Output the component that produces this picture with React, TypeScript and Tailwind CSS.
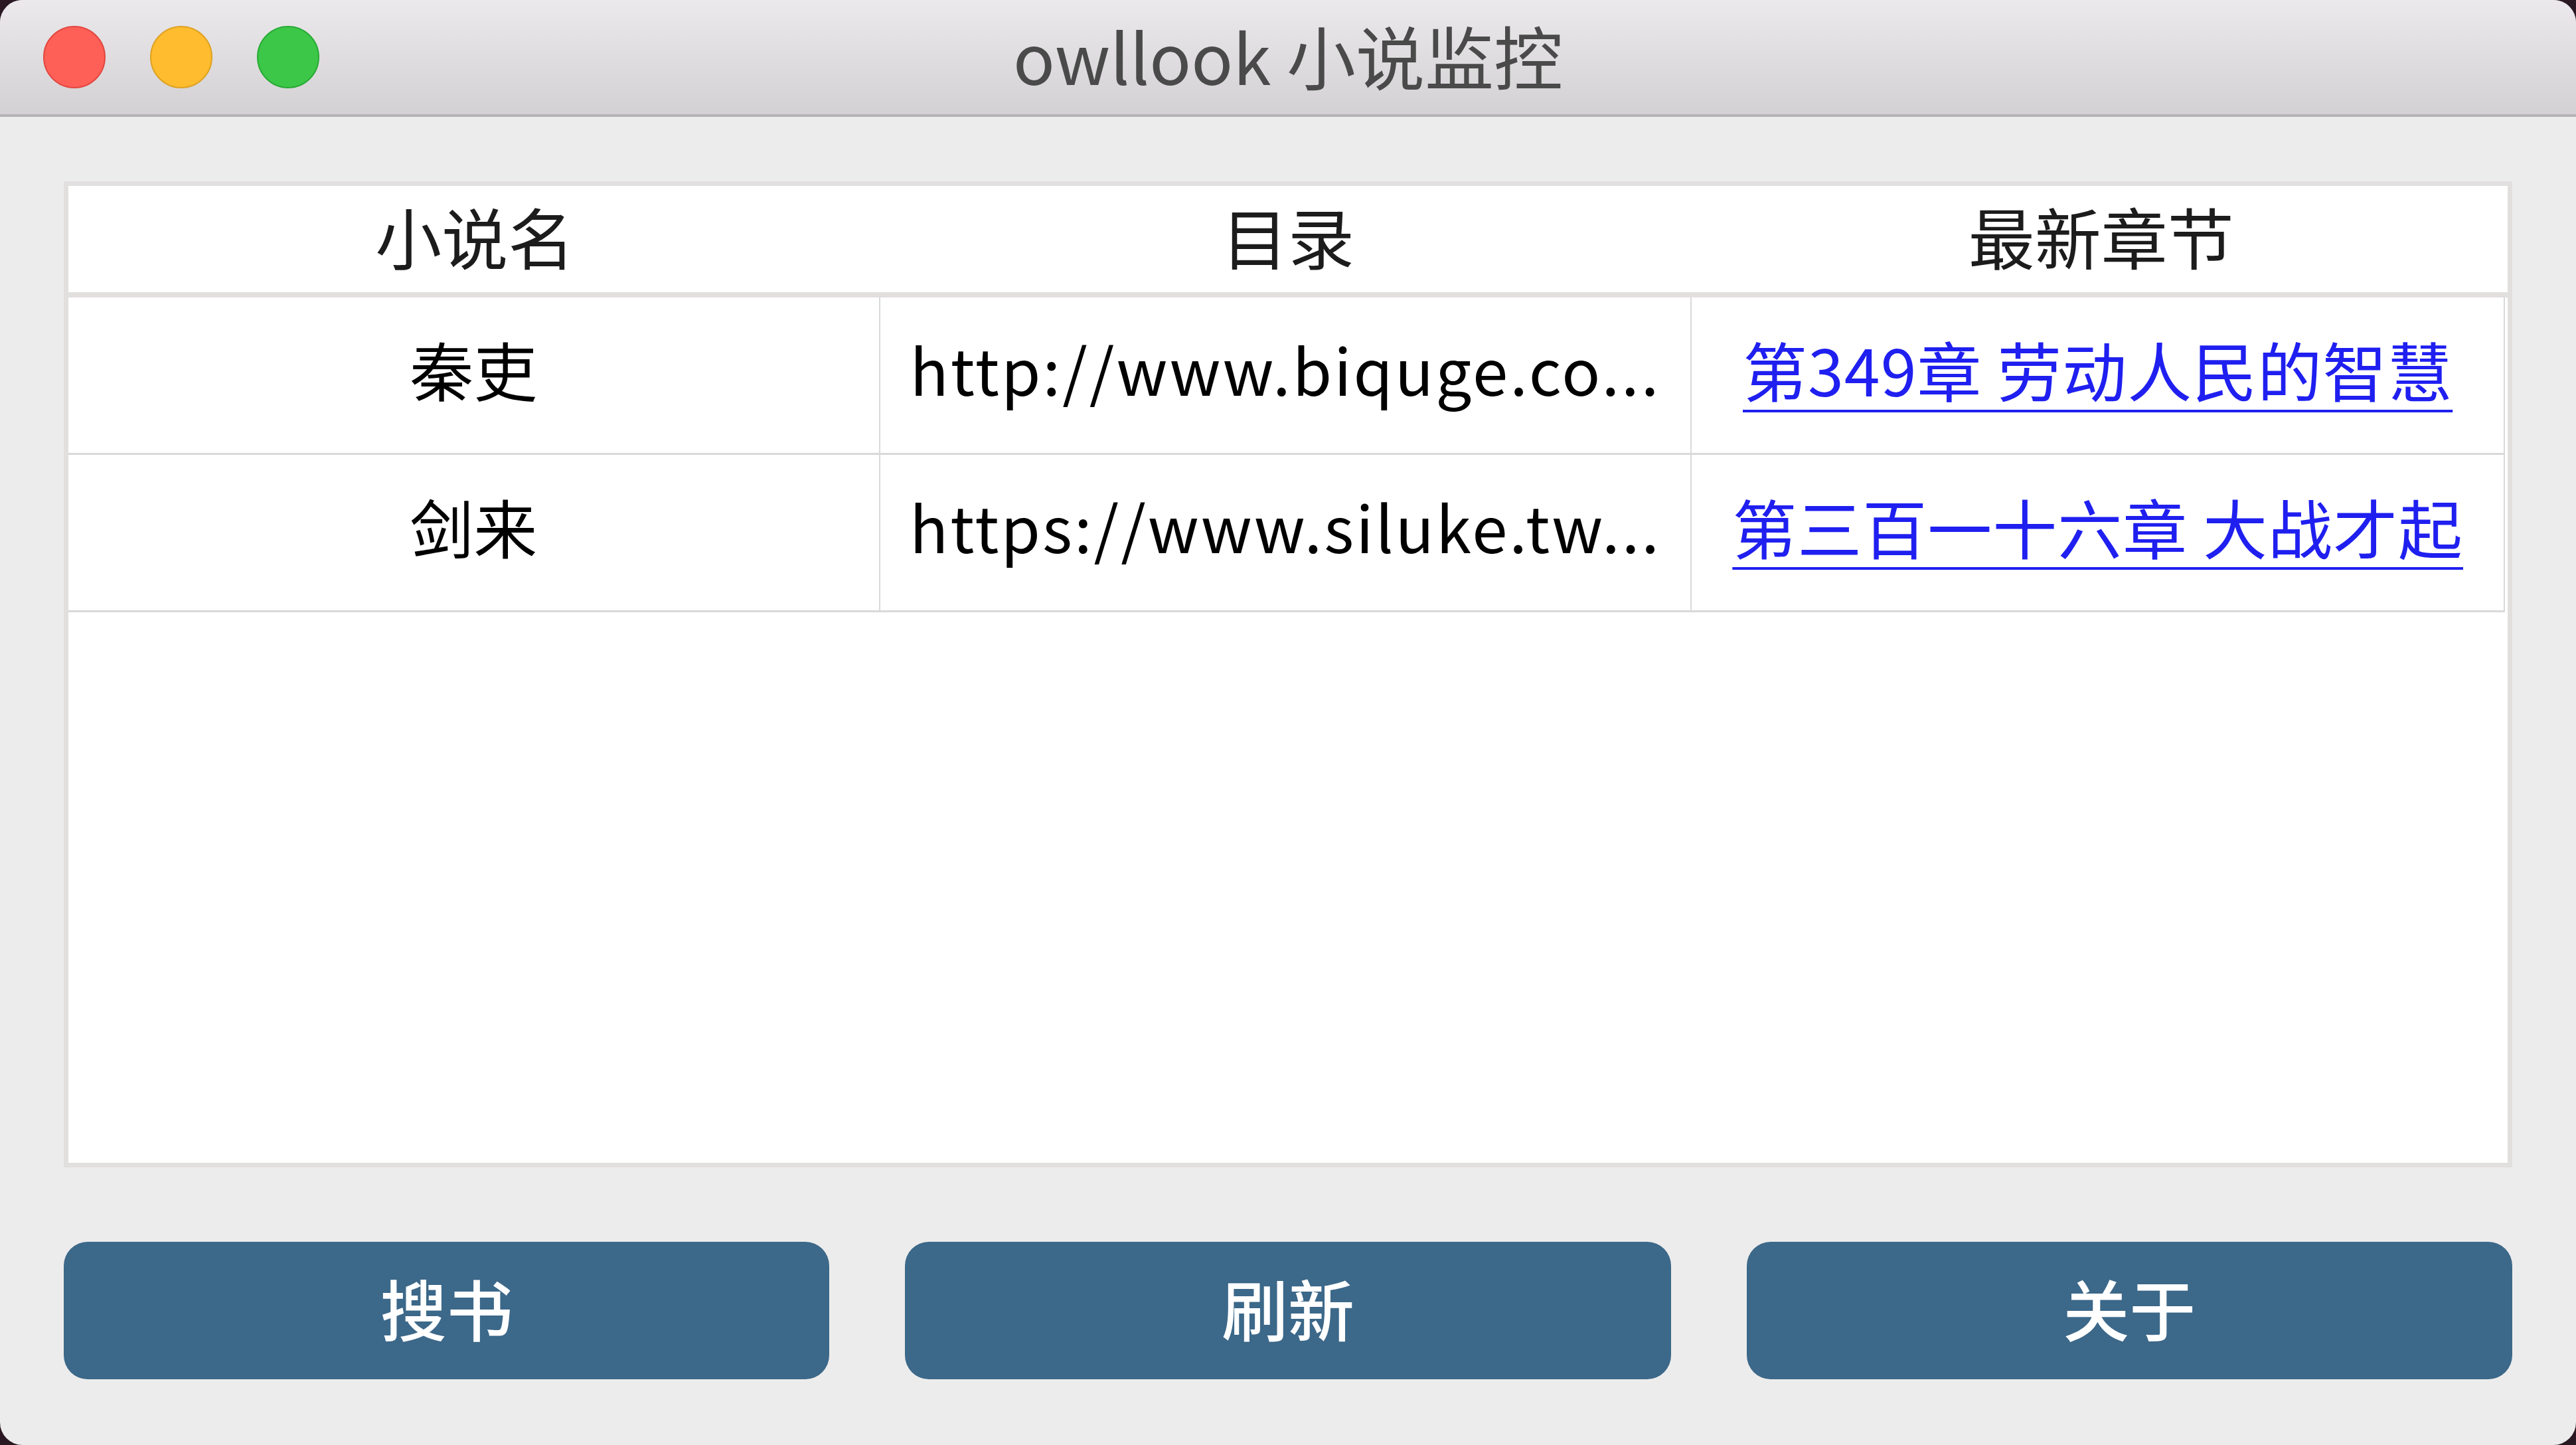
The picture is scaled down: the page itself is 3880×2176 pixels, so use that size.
import React from 'react'

const font = { fontFamily: '"Noto Sans CJK SC", "Noto Sans", sans-serif' }

const rows = [
  { name: '秦吏', url: 'http://www.biquge.co...', latest: '第349章 劳动人民的智慧' },
  { name: '剑来', url: 'https://www.siluke.tw...', latest: '第三百一十六章 大战才起' },
]

function TrafficLight({ color, ring }: { color: string; ring: string }) {
  return <div className={`h-[94px] w-[94px] rounded-full border-2 ${color} ${ring}`} />
}

function ActionButton({ label }: { label: string }) {
  return (
    <button className="flex h-[207px] flex-1 items-center justify-center rounded-[36px] bg-[#3c6889] pb-[10px] text-[100px] font-medium text-white">
      {label}
    </button>
  )
}

export default function App() {
  return (
    <div className="h-[2176px] w-[3880px] bg-[#2a1822]" style={font}>
      <div className="flex h-full w-full flex-col overflow-hidden rounded-[34px] bg-[#ececec]">
        {/* title bar */}
        <div className="relative flex h-[176px] shrink-0 items-center border-b-4 border-[#b5b3b5] bg-gradient-to-b from-[#ebe9eb] to-[#d3d1d3]">
          <div className="flex items-center gap-[67px] pl-[65px]">
            <TrafficLight color="bg-[#fe5f57]" ring="border-[#e2463f]" />
            <TrafficLight color="bg-[#febc2e]" ring="border-[#dea123]" />
            <TrafficLight color="bg-[#3dc748]" ring="border-[#27aa34]" />
          </div>
          <div className="absolute inset-x-0 top-[8px] text-center text-[104px] leading-[150px] text-[#4a4a4a]">
            owllook 小说监控
          </div>
        </div>

        <div className="flex flex-1 flex-col px-[96px] pt-[97px] pb-[99px]">
          {/* table */}
          <div className="flex h-[1485px] flex-col border-[7px] border-[#e2dfdf] bg-white">
            <div className="grid h-[168px] shrink-0 grid-cols-3 border-b-[8px] border-[#e2dfdf] pb-[14px] text-[100px] text-[#1c1c1c]">
              <div className="flex items-center justify-center">小说名</div>
              <div className="flex items-center justify-center">目录</div>
              <div className="flex items-center justify-center">最新章节</div>
            </div>
            {rows.map(r => (
              <div
                key={r.name}
                className="mr-[4px] grid h-[237px] grid-cols-3 border-r-2 border-b-[3px] border-[#d9d9d9] text-[96px] text-black"
              >
                <div className="flex items-center justify-center border-r-2 border-[#d9d9d9] pb-[20px]">
                  {r.name}
                </div>
                <div className="flex min-w-0 items-center justify-center overflow-hidden whitespace-nowrap border-r-2 border-[#d9d9d9] pb-[20px] tracking-[3px]">
                  {r.url}
                </div>
                <div className="flex min-w-0 items-center justify-center overflow-hidden whitespace-nowrap pb-[20px]">
                  <a
                    href="#"
                    className="text-[97px] tracking-[1px] text-[#1f1ff0] underline decoration-[4px] underline-offset-[20px]"
                  >
                    {r.latest}
                  </a>
                </div>
              </div>
            ))}
          </div>

          {/* buttons */}
          <div className="mt-auto flex gap-[114px]">
            <ActionButton label="搜书" />
            <ActionButton label="刷新" />
            <ActionButton label="关于" />
          </div>
        </div>
      </div>
    </div>
  )
}
